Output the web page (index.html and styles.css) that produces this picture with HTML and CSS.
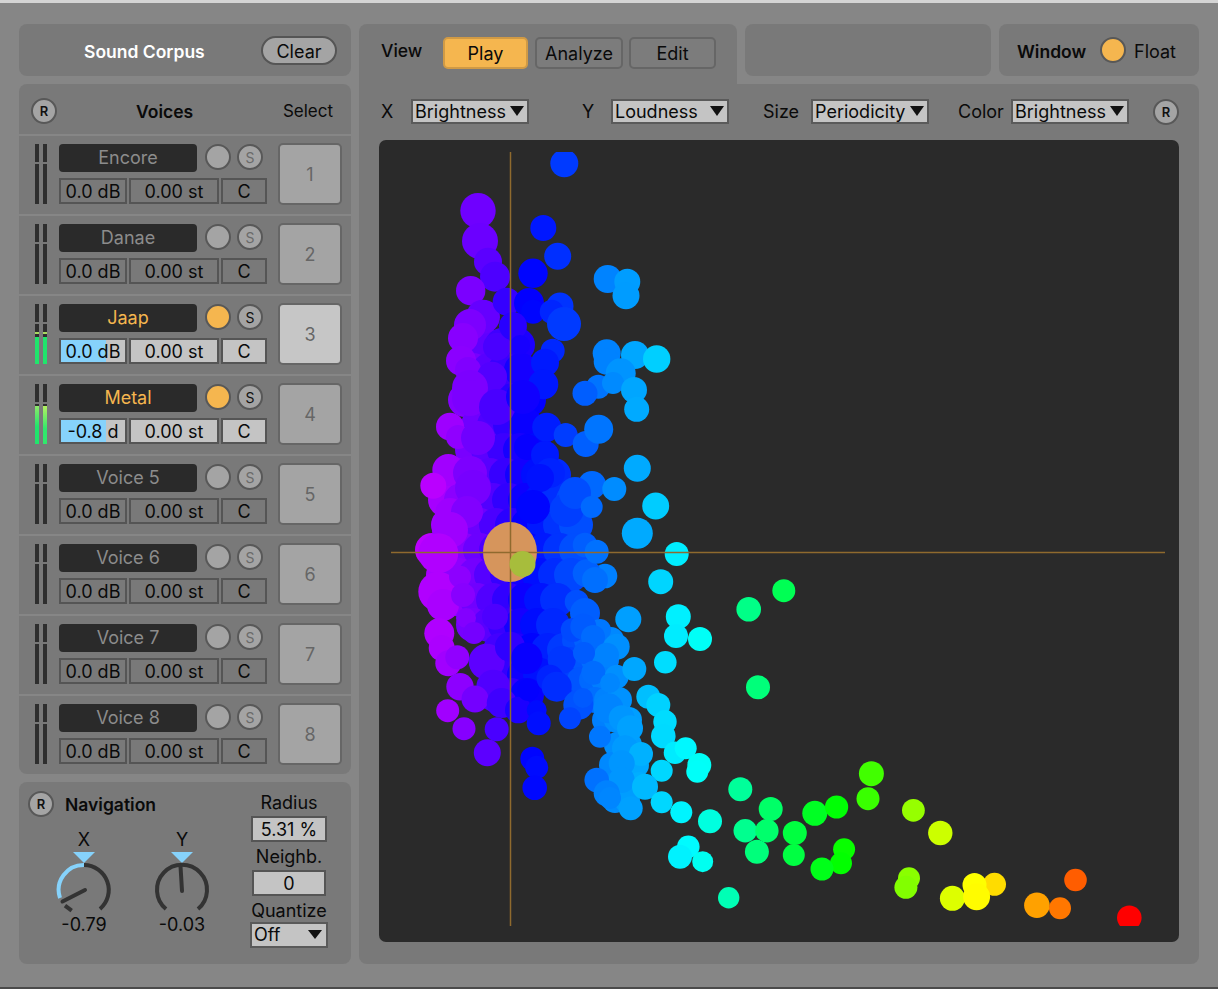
FILE: index.html
```html
<!DOCTYPE html>
<html lang="en">
<head>
<meta charset="utf-8">
<title>Sound Corpus</title>
<link rel="stylesheet" href="styles.css">
</head>
<body>
<div class="app">
  <div class="left">
    <section class="panel corpus">
      <span class="corpus-title">Sound Corpus</span>
      <button class="pill">Clear</button>
    </section>
    <section class="panel voices">
      <header class="voices-head">
        <span class="round r">R</span>
        <b class="voices-title">Voices</b>
        <span class="select-title">Select</span>
      </header>
      <div class="voice">
        <div class="meter"><i class="bar"></i><i class="bar"></i></div>
        <div class="voice-main">
          <div class="voice-top"><span class="name">Encore</span><span class="round toggle"></span><span class="round s">S</span></div>
          <div class="voice-fields"><span class="field f-db">0.0 dB</span><span class="field f-st">0.00 st</span><span class="field f-c">C</span></div>
        </div>
        <span class="sel">1</span>
      </div>
      <div class="voice">
        <div class="meter"><i class="bar"></i><i class="bar"></i></div>
        <div class="voice-main">
          <div class="voice-top"><span class="name">Danae</span><span class="round toggle"></span><span class="round s">S</span></div>
          <div class="voice-fields"><span class="field f-db">0.0 dB</span><span class="field f-st">0.00 st</span><span class="field f-c">C</span></div>
        </div>
        <span class="sel">2</span>
      </div>
      <div class="voice on">
        <div class="meter"><i class="bar"><em class="lvl lvl-jaap"></em><em class="peak"></em></i><i class="bar"><em class="lvl lvl-jaap"></em><em class="peak"></em></i></div>
        <div class="voice-main">
          <div class="voice-top"><span class="name">Jaap</span><span class="round toggle"></span><span class="round s">S</span></div>
          <div class="voice-fields"><span class="field f-db"><em class="fill"></em><span class="ftext">0.0 dB</span></span><span class="field f-st">0.00 st</span><span class="field f-c">C</span></div>
        </div>
        <span class="sel sel-lit">3</span>
      </div>
      <div class="voice on">
        <div class="meter"><i class="bar"><em class="lvl lvl-metal"></em></i><i class="bar"><em class="lvl lvl-metal hot"></em></i></div>
        <div class="voice-main">
          <div class="voice-top"><span class="name">Metal</span><span class="round toggle"></span><span class="round s">S</span></div>
          <div class="voice-fields"><span class="field f-db"><em class="fill"></em><span class="ftext">-0.8 d</span></span><span class="field f-st">0.00 st</span><span class="field f-c">C</span></div>
        </div>
        <span class="sel">4</span>
      </div>
      <div class="voice">
        <div class="meter"><i class="bar"></i><i class="bar"></i></div>
        <div class="voice-main">
          <div class="voice-top"><span class="name">Voice 5</span><span class="round toggle"></span><span class="round s">S</span></div>
          <div class="voice-fields"><span class="field f-db">0.0 dB</span><span class="field f-st">0.00 st</span><span class="field f-c">C</span></div>
        </div>
        <span class="sel">5</span>
      </div>
      <div class="voice">
        <div class="meter"><i class="bar"></i><i class="bar"></i></div>
        <div class="voice-main">
          <div class="voice-top"><span class="name">Voice 6</span><span class="round toggle"></span><span class="round s">S</span></div>
          <div class="voice-fields"><span class="field f-db">0.0 dB</span><span class="field f-st">0.00 st</span><span class="field f-c">C</span></div>
        </div>
        <span class="sel">6</span>
      </div>
      <div class="voice">
        <div class="meter"><i class="bar"></i><i class="bar"></i></div>
        <div class="voice-main">
          <div class="voice-top"><span class="name">Voice 7</span><span class="round toggle"></span><span class="round s">S</span></div>
          <div class="voice-fields"><span class="field f-db">0.0 dB</span><span class="field f-st">0.00 st</span><span class="field f-c">C</span></div>
        </div>
        <span class="sel">7</span>
      </div>
      <div class="voice">
        <div class="meter"><i class="bar"></i><i class="bar"></i></div>
        <div class="voice-main">
          <div class="voice-top"><span class="name">Voice 8</span><span class="round toggle"></span><span class="round s">S</span></div>
          <div class="voice-fields"><span class="field f-db">0.0 dB</span><span class="field f-st">0.00 st</span><span class="field f-c">C</span></div>
        </div>
        <span class="sel">8</span>
      </div>
    </section>
    <section class="panel nav">
      <div class="nav-left">
        <div class="nav-head"><span class="round r">R</span><b class="nav-title">Navigation</b></div>
        <div class="knobs">
          <div class="knob">
            <span class="knob-label">X</span>
            <svg class="knob-svg" width="60" height="70" viewBox="0 0 60 70">
              <polygon class="tri" points="19,0 41,0 30,11"/>
              <path class="arc-dark" d="M30 13 A25 25 0 0 1 46 57"/>
              <path class="arc-blue" d="M30 13 A25 25 0 0 0 6 46"/>
              <path class="arc-dark" d="M11 53.7 L17.7 58.7"/>
              <path class="needle" d="M31 38 L8.5 49.5"/>
            </svg>
            <span class="knob-val">-0.79</span>
          </div>
          <div class="knob">
            <span class="knob-label">Y</span>
            <svg class="knob-svg" width="60" height="70" viewBox="0 0 60 70">
              <polygon class="tri" points="19,0 41,0 30,11"/>
              <path class="arc-dark" d="M14 57 A25 25 0 1 1 46 57"/>
              <path class="needle" d="M30 39 L28.5 14"/>
            </svg>
            <span class="knob-val">-0.03</span>
          </div>
        </div>
      </div>
      <div class="nav-right">
        <span class="nr-label">Radius</span>
        <span class="field lit nr-field">5.31 %</span>
        <span class="nr-label">Neighb.</span>
        <span class="field lit nr-field nr-narrow">0</span>
        <span class="nr-label">Quantize</span>
        <span class="drop nr-drop">Off<i class="arrow"></i></span>
      </div>
    </section>
  </div>

  <div class="right">
    <div class="top-row">
      <section class="view-tab">
        <span class="view-label">View</span>
        <button class="tab tab-on">Play</button>
        <button class="tab">Analyze</button>
        <button class="tab">Edit</button>
      </section>
      <section class="panel spacer"></section>
      <section class="panel window">
        <b class="window-title">Window</b>
        <span class="round toggle lit-toggle"></span>
        <span class="float">Float</span>
      </section>
    </div>
    <section class="main">
      <div class="axes">
        <span class="axis axis-x"><span class="axis-name">X</span><span class="drop">Brightness<i class="arrow"></i></span></span>
        <span class="axis axis-y"><span class="axis-name">Y</span><span class="drop">Loudness<i class="arrow"></i></span></span>
        <span class="axis axis-size"><span class="axis-name">Size</span><span class="drop">Periodicity<i class="arrow"></i></span></span>
        <span class="axis axis-color"><span class="axis-name">Color</span><span class="drop">Brightness<i class="arrow"></i></span></span>
        <span class="round r axis-r">R</span>
      </div>
      <div class="plot">
        <svg id="scatter" class="plot-svg" width="800" height="802" viewBox="379 140 800 802" xmlns="http://www.w3.org/2000/svg">
          <defs><clipPath id="plotclip"><rect x="391" y="152" width="774" height="774"/></clipPath></defs>
          <g clip-path="url(#plotclip)"><g id="points" class="points"></g></g>
          <ellipse class="cursor" cx="510" cy="552" rx="27" ry="30"/>
          <path class="cross" d="M510.5 152 V926 M391 552.5 H1165"/>
          <circle class="cursor-dot" cx="522.5" cy="564" r="13"/>
        </svg>
      </div>
    </section>
  </div>
</div>
<script src="scatter.js"></script>
</body>
</html>
```

FILE: styles.css
```css
* { box-sizing: border-box; }
html, body { margin: 0; height: 100%; overflow: hidden; }
body {
  background: #868686;
  font-family: Inter, "Liberation Sans", Arial, sans-serif;
  font-size: 18px;
  color: #0a0a0a;
}
b { font-weight: 600; font-size: 17.5px; }
em, i { font-style: normal; display: block; }
button { font: inherit; color: inherit; padding: 0; }
.app {
  height: 989px;
  border-top: 3px solid #d4d4d4;
  border-bottom: 2px solid #4a4a4a;
  padding: 21px 19px 0;
  display: flex;
  gap: 8px;
}
.left { width: 332px; display: flex; flex-direction: column; gap: 8px; }
.right { width: 840px; display: flex; flex-direction: column; }
.panel { background: #797979; border-radius: 8px; }

.round {
  display: flex; align-items: center; justify-content: center;
  width: 26px; height: 26px; flex: none;
  border-radius: 50%;
  border: 2px solid #585858;
  background: #a4a4a4;
}
.r { font-size: 13px; font-weight: 600; color: #111; }
.toggle { background: #a4a4a4; }
.s { font-size: 14px; color: #6a6a6a; }

.corpus {
  height: 52px;
  display: flex; align-items: center;
  padding: 0 14px 0 65px;
}
.corpus-title { color: #fff; font-weight: 600; font-size: 17.5px; flex: 1; padding-top: 2px; }
.pill {
  width: 76px; height: 29px;
  border: 2px solid #555;
  border-radius: 15px;
  background: #a4a4a4;
  padding-top: 2px;
}

.voices { height: 690px; overflow: hidden; }
.voices-head {
  height: 50px;
  display: flex; align-items: center;
  padding: 4px 18px 0 12px;
}
.voices-title { margin-left: 79px; flex: 1; }
.select-title { font-size: 17px; }
.voice {
  height: 80px;
  border-top: 2px solid #868686;
  padding: 8px 9px 0 16px;
  display: flex;
  gap: 12px;
}
.meter { width: 12px; height: 60px; display: flex; justify-content: space-between; }
.bar {
  position: relative;
  width: 4px; height: 60px;
  background:
    linear-gradient(#2e2e2e 0 18px, transparent 18px 20px, #2e2e2e 20px);
}
.lvl { position: absolute; left: 0; right: 0; bottom: 0; }
.lvl-jaap { height: 27px; background: #20e56c; }
.peak { position: absolute; left: 0; right: 0; top: 28px; height: 2px; background: #a8d860; }
.lvl-metal { height: 38px; background: linear-gradient(#8ee86a, #20e56c 55%); }
.hot { background: linear-gradient(#b4f060, #30e86c 60%); }

.voice-main { width: 208px; display: flex; flex-direction: column; gap: 6px; }
.voice-top { display: flex; align-items: center; height: 28px; }
.name {
  width: 138px; height: 28px;
  background: #2a2a2a;
  border-radius: 4px;
  color: #8c8c8c;
  text-align: center;
  line-height: 27px;
  margin-right: 8px;
}
.voice-top .toggle { margin-top: -2px; margin-right: 6px; }
.voice-top .s { margin-top: -2px; }
.voice-fields { display: flex; gap: 2px; }
.field {
  position: relative;
  height: 26px;
  border: 2px solid #555;
  text-align: center;
  line-height: 24px;
  overflow: hidden;
  white-space: nowrap;
}
.f-db { width: 68px; }
.f-st { width: 90px; }
.f-c { width: 46px; }
.sel {
  width: 64px; height: 62px;
  margin-top: -1px; margin-left: -1px;
  display: flex; align-items: center; justify-content: center;
  background: #a4a4a4;
  border: 2px solid #666;
  border-radius: 5px;
  color: #666;
}
.sel-lit { background: #c6c6c6; }
.on .name { color: #f5b64f; }
.on .toggle { background: #f5b64f; }
.on .s { color: #111; }
.on .field { background: #c4c4c4; }
.fill { position: absolute; left: 0; top: 0; bottom: 0; width: 45px; background: #86d2fb; }
.ftext { position: relative; }
.lit { background: #c4c4c4; }

.nav { height: 182px; display: flex; padding: 9px 22px 0 9px; }
.nav-left { width: 223px; }
.nav-head { display: flex; align-items: center; gap: 11px; }
.nav-title { font-weight: 600; }
.knobs { display: flex; gap: 38px; padding-left: 26px; margin-top: 12px; }
.knob { width: 60px; display: flex; flex-direction: column; align-items: center; }
.knob-label { height: 21px; line-height: 21px; }
.knob-val { height: 22px; line-height: 22px; margin-top: -8px; }
.knob-svg { display: block; margin-top: 2px; }
.tri { fill: #86d2fb; }
.arc-dark, .arc-blue, .needle { fill: none; stroke-width: 4; }
.arc-dark { stroke: #333; }
.arc-blue { stroke: #86d2fb; }
.needle { stroke: #333; stroke-linecap: round; }
.nav-right { width: 78px; display: flex; flex-direction: column; align-items: center; flex: none; margin-left: -1px; }
.nr-label { height: 25px; line-height: 24px; white-space: nowrap; }
.nr-field { width: 76px; margin-bottom: 3px; flex: none; }
.nr-narrow { width: 74px; }
.drop.nr-drop { width: 78px; height: 26px; margin-top: -2px; flex: none; }
.nr-drop .arrow { top: 6px; right: 4px; border-left-width: 7px; border-right-width: 7px; border-top-width: 9px; }

.top-row { display: flex; gap: 8px; height: 60px; align-items: flex-start; }
.view-tab {
  width: 378px; height: 60px;
  background: #797979;
  border-radius: 8px 8px 0 0;
  display: flex; align-items: flex-start;
  gap: 7px;
  padding: 13px 0 0 22px;
}
.view-label { width: 55px; height: 32px; line-height: 28px; font-weight: 500; font-size: 17.5px; }
.tab {
  width: 88px; height: 32px;
  border: 2px solid #666;
  border-radius: 5px;
  background: #7c7c7c;
}
.tab:first-of-type { width: 85px; }
.tab-on { background: #f5b64f; border-color: #d09a45; }
.tab:last-child { width: 87px; margin-left: -1px; }
.spacer { width: 246px; height: 52px; }
.window {
  width: 200px; height: 52px;
  display: flex; align-items: center;
  padding: 0 0 0 18px;
}
.window-title { font-weight: 600; width: 83px; padding-top: 2px; }
.lit-toggle { background: #f5b64f; }
.float { margin-left: 8px; padding-top: 2px; }

.main {
  height: 880px;
  background: #797979;
  border-radius: 0 8px 8px 8px;
  padding: 15px 20px 0;
}
.axes { display: flex; align-items: center; height: 25px; position: relative; }
.axis { display: flex; align-items: center; justify-content: space-between; }
.axis-x { width: 150px; padding-left: 2px; }
.axis-y { width: 147px; margin-left: 53px; padding-left: 0; }
.axis-size { width: 166px; margin-left: 34px; }
.axis-color { width: 171px; margin-left: 29px; }
.axis-r { margin-left: 24px; }
.axis-name { white-space: nowrap; }
.drop {
  position: relative;
  display: block;
  width: 118px; height: 25px;
  background: #c4c4c4;
  border: 2px solid #5a5a5a;
  padding-left: 2px;
  line-height: 22px;
  white-space: nowrap;
}
.arrow {
  position: absolute; right: 3px; top: 5px;
  width: 0; height: 0;
  border-left: 7px solid transparent;
  border-right: 7px solid transparent;
  border-top: 10px solid #111;
}
.plot {
  width: 800px; height: 802px;
  margin-top: 16px;
  background: #2a2a2a;
  border-radius: 7px;
  overflow: hidden;
}
.plot-svg { display: block; }
.points { filter: blur(.5px); }
.cursor { fill: #d6955c; }
.cross { fill: none; stroke: #8f6a2e; stroke-width: 1.5; }
.cursor-dot { fill: #a7bd3c; }
```

FILE: scatter.js
```js
// Corpus points as [x, y, radius]; the colour axis is mapped from X (brightness).
var stops = [[430,285],[478,266],[510,251],[530,240],[560,228],[585,218],[605,210],[637,200],[660,190],[680,183],[700,178],[730,162],[748,152],[783,140],[795,135],[840,120],[871,105],[905,90],[913,85],[940,72],[952,68],[975,60],[994,52],[1037,38],[1060,28],[1075,22],[1129,0]];
function hue(x) {
  if (x <= stops[0][0]) return stops[0][1];
  for (var i = 1; i < stops.length; i++) {
    if (x <= stops[i][0]) {
      var a = stops[i - 1], b = stops[i];
      return a[1] + (b[1] - a[1]) * (x - a[0]) / (b[0] - a[0]);
    }
  }
  return 0;
}
var bands = [[345,470,520],[370,465,525],[400,465,530],[425,470,535],[450,472,540],[475,450,555],[500,445,575],[525,440,578],[550,432,578],[575,435,575],[600,445,568],[625,465,558],[650,500,565],[675,500,548],[695,495,540]];
var dense = [[640,575,612],[660,565,612],[680,568,615],[700,590,628],[720,605,635],[745,612,638],[765,612,640],[785,610,640],[800,615,635]];
var pts = [];
bands.forEach(function (b, n) {
  for (var x = b[1] + (n % 2) * 8; x <= b[2]; x += 16) pts.push([x, b[0], 17]);
});
dense.forEach(function (b, n) {
  for (var x = b[1] + (n % 2) * 5; x <= b[2]; x += 12) pts.push([x, b[0], 13]);
});
pts = pts.concat([
[478,210.7,17.7],[480,241,18],[488,261.7,14],[495,276.7,15],[470.7,290.7,14.7],[483,316.7,17],[470,325,16],[463,338,15],[497,346.7,14],[461,360.7,15],[468,370,13],[492,376.7,15],[470,388,18],[470,398,18],[497,407,18],[450,426.7,14],[458,437,12],[478,438,17],[448.3,470,16],[470,473,17],[473,488,18],[433.3,485.7,13],[450,513,15],[467,512,16],[450,530,18],
[438.3,553.3,20],[438.3,591.7,20],[443,605,16],[460,576.7,11],[463,595,12],[466,618,10],[495,616.7,13],[474,633,11],[439.3,633.3,15],[441.7,648,13],[448.3,663.3,13],[457.3,657.3,12],[486.7,661.7,18],[510,646.7,15],[493.3,686.7,17],[460,686.7,13.7],[475,699,13.5],[501.7,703,15],[518.3,710,13.3],[447.7,710.7,11.5],[464,728.7,11.5],[496.7,729.3,12],[487.3,752.7,13.5],
[564.3,163.3,14],[543.3,228,13],[557.7,256.3,13.5],[533,273.3,14.7],[506.7,301.7,14],[529,303,15],[533,311.7,12],[560,306,13.5],[551.7,311.7,12],[564,324,17],[513,326,14],[520,345,10],[552.7,350.7,12],[545,362.7,14],[543.3,384.3,15],[523,397,17],[546.7,427.3,14.5],[527,447,13],[545,455,14],[550,473,15],[540,478,14],[533,507,17],[566.7,510,17],
[607.7,279,14],[627.3,281.7,13],[626,295.7,13.5],[606.7,353.3,14],[606.7,361.7,13],[635,355,14],[620.7,373.3,15],[656.7,359,13.7],[598.3,386.7,12],[585,393.3,12.5],[613,383,11],[634,390,13],[636.7,409.3,12.5],[565.7,435,12],[585.7,444,13],[598.7,429.3,14.5],[637.3,468.3,13.5],[655.7,506,13.5],[637.3,533.3,15.5],[592,485,14],[575,493,16],[614.3,489,12],[591.7,507,11],
[526.7,658.3,15.7],[528.3,690,11],[536.7,710,10],[538.7,723.3,12],[532.3,758.7,12],[536.7,767.3,11.5],[534.7,787.7,12.3],[561.7,660,14],[550,678.3,13.5],[556.7,686.7,15],[578.3,705,15],[570,718.3,11],[583,698,10],[576.7,601.7,12],[585,613,15],[600,630,11],[572.7,630,12],[583.3,626.7,13],[593,637,12],[628.3,619.3,13],[605,576,12.3],[586.7,573.3,14],[595,580,13],[585,545,12.3],[596.7,551.7,12],[616.7,646.7,13],[606.7,655,12.3],[584,653,11],[593.3,672.7,12],[616.7,676.7,12],[610,683,10],[634.3,669,12],
[676.7,554,12],[660.7,581.7,12.5],[678.3,616.7,12.5],[676,636,12],[700,639,12],[665.3,662.3,11.3],[648.3,696.7,12],[658.3,705,12],[665,721.7,11.7],[663.3,736,12.3],[608.3,708.3,15],[621.7,718.3,13],[630,728.3,13],[600,736.7,11],[625,748.3,13],[641,754,12],[621.7,763.3,13],[621.7,780,13],[661.7,770.7,11],[645,786.7,13],[596.7,780,12.3],[606.7,793.3,13],[610,798,11],[630.7,808.3,12],[661.7,802.3,11],[675,752.7,11.3],[685.7,748.3,11],[699.3,765,12],[697.3,771.7,11],[681.3,812.3,11],[710,821.3,12],[688.3,846.7,11.3],[680,856.7,12],[702.7,861.7,10.5],[728.7,897.7,10.7],[748.7,609.3,12.3],[758,687.3,12],
[783.8,590.7,11.5],[871.4,773.7,12.5],[868,798.7,11.5],[913.4,810.3,11.4],[940.3,833,12.2],[770.7,809,12],[814.8,813.3,12.5],[836.6,807,11.6],[740.3,789.3,12],[745.2,830.7,11.7],[766.9,830.7,11.7],[794.8,833,12],[756.9,851.7,12],[793.8,855,11],[844.1,849.3,11],[841,863.3,11],[822,869,11.5],[909,878.3,11],[905.9,887.3,11.5],[994.5,884.3,11.5],[952.4,898.3,12.5],[974.5,885,12],[976.6,896.7,13.5],[1036.9,905.3,12.8],[1060,908.3,11],[1075.5,880,11.3],[1129.3,917.7,12.3]
]);
var group = document.getElementById('points');
pts.forEach(function (p) {
  var c = document.createElementNS('http://www.w3.org/2000/svg', 'circle');
  c.setAttribute('cx', p[0]);
  c.setAttribute('cy', p[1]);
  c.setAttribute('r', p[2]);
  c.setAttribute('fill', 'hsl(' + hue(p[0]).toFixed(1) + ',100%,50%)');
  group.appendChild(c);
});
```
